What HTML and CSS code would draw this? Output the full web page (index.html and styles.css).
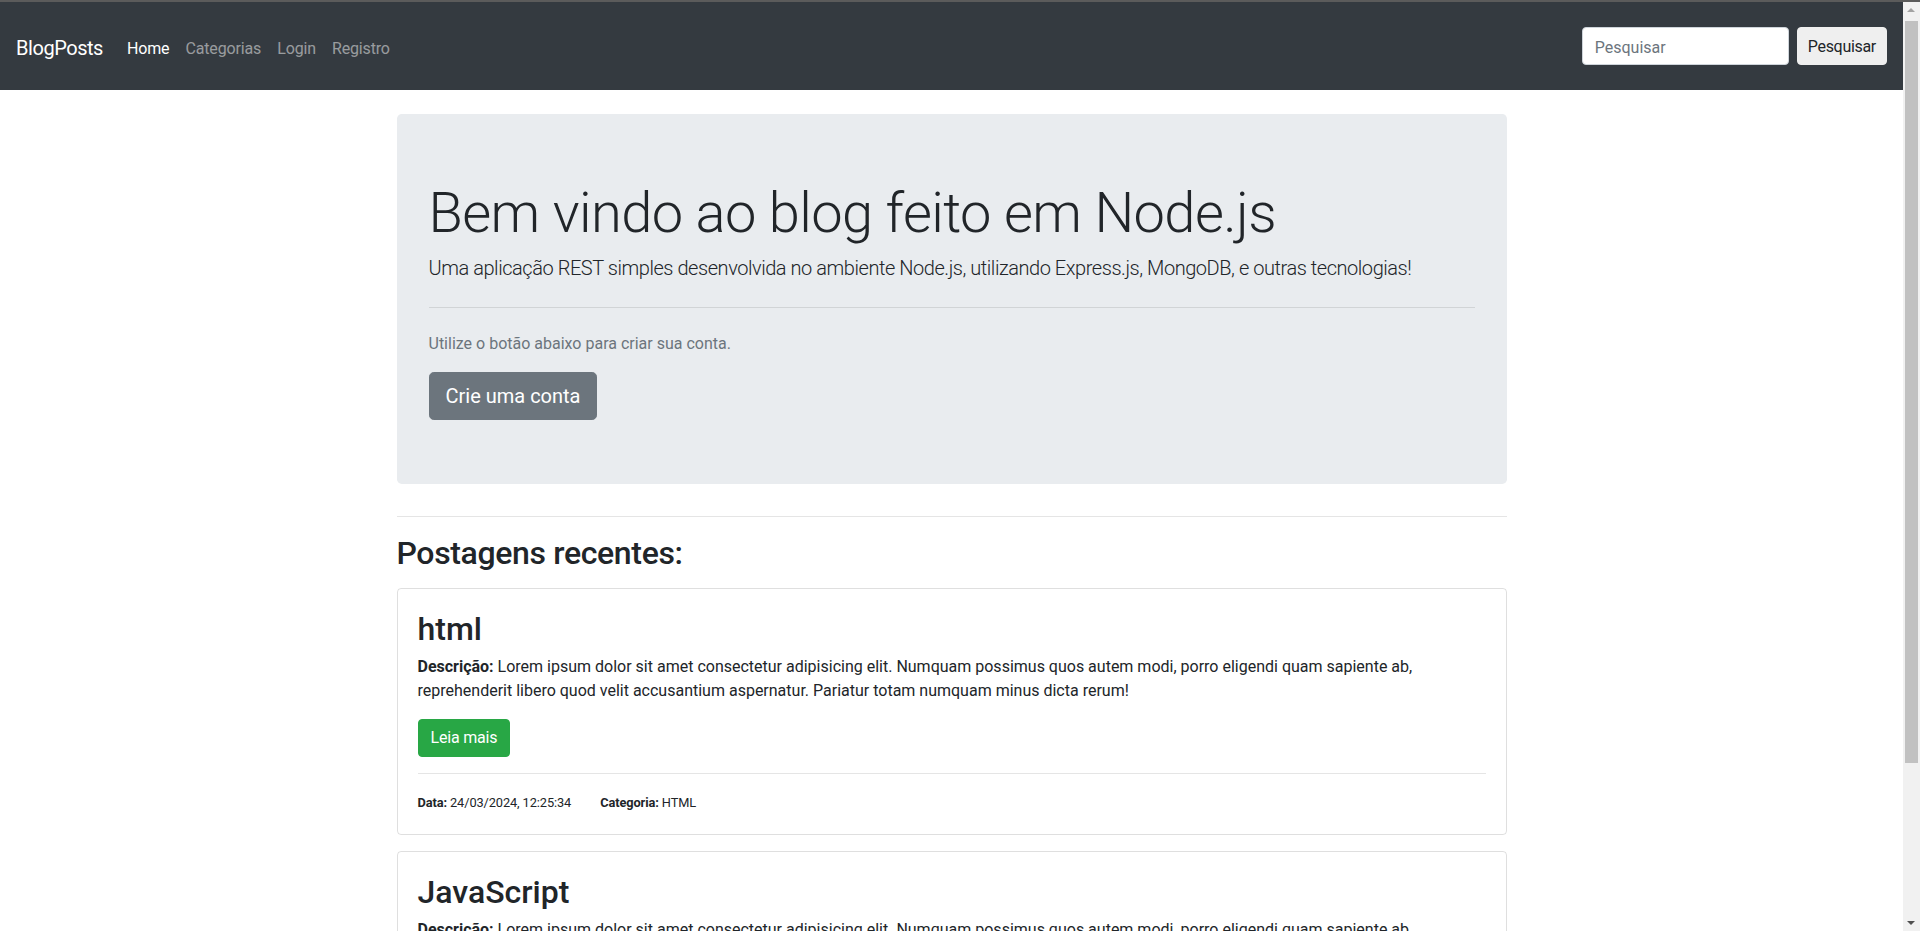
FILE: index.html
```html
<!DOCTYPE html>
<html lang="pt-BR">
<head>
<meta charset="utf-8">
<title>BlogPosts</title>
<link rel="stylesheet" href="styles.css">
</head>
<body>
<div class="topline"></div>
<div class="page">
  <nav class="navbar">
    <a class="brand" href="#">BlogPosts</a>
    <ul class="nav">
      <li><a class="nav-link active" href="#">Home</a></li>
      <li><a class="nav-link" href="#">Categorias</a></li>
      <li><a class="nav-link" href="#">Login</a></li>
      <li><a class="nav-link" href="#">Registro</a></li>
    </ul>
    <form class="search">
      <input class="search-input" type="search" placeholder="Pesquisar">
      <button class="search-btn" type="button">Pesquisar</button>
    </form>
  </nav>

  <main class="container">
    <section class="jumbotron">
      <h1 class="display">Bem vindo ao blog feito em Node.js</h1>
      <p class="lead">Uma aplicação REST simples desenvolvida no ambiente Node.js, utilizando Express.js, MongoDB, e outras tecnologias!</p>
      <hr class="jumbo-hr">
      <p class="muted">Utilize o botão abaixo para criar sua conta.</p>
      <a class="btn btn-secondary" href="#">Crie uma conta</a>
    </section>

    <hr class="divider">
    <h2 class="section-title">Postagens recentes:</h2>

    <article class="card">
      <h2 class="card-title">html</h2>
      <p class="card-text"><b>Descrição:</b> Lorem ipsum dolor sit amet consectetur adipisicing elit. Numquam possimus quos autem modi, porro eligendi quam sapiente ab, reprehenderit libero quod velit accusantium aspernatur. Pariatur totam numquam minus dicta rerum!</p>
      <a class="btn btn-success" href="#">Leia mais</a>
      <hr class="card-hr">
      <p class="meta"><small><b>Data:</b> 24/03/2024, 12:25:34</small><small class="meta-cat"><b>Categoria:</b> HTML</small></p>
    </article>

    <article class="card">
      <h2 class="card-title">JavaScript</h2>
      <p class="card-text"><b>Descrição:</b> Lorem ipsum dolor sit amet consectetur adipisicing elit. Numquam possimus quos autem modi, porro eligendi quam sapiente ab, reprehenderit libero quod velit accusantium aspernatur. Pariatur totam numquam minus dicta rerum!</p>
      <a class="btn btn-success" href="#">Leia mais</a>
      <hr class="card-hr">
      <p class="meta"><small><b>Data:</b> 24/03/2024, 12:31:07</small><small class="meta-cat"><b>Categoria:</b> JavaScript</small></p>
    </article>
  </main>
</div>

<div class="scrollbar" aria-hidden="true">
  <span class="sb-arrow sb-up"></span>
  <span class="sb-thumb"></span>
  <span class="sb-arrow sb-down"></span>
</div>
</body>
</html>
```
FILE: styles.css
```css
* { box-sizing: border-box; }

body {
  margin: 0;
  font-family: "Segoe UI", Roboto, "Noto Sans", "Liberation Sans", sans-serif;
  font-size: 16px;
  line-height: 1.5;
  color: #212529;
  background: #fff;
}

.topline {
  height: 2px;
  background: #5b5b5b;
}

.page {
  margin-right: 17px;
}

/* classic window scrollbar drawn over the right edge */
.scrollbar {
  position: fixed;
  top: 2px;
  right: 0;
  bottom: 0;
  width: 17px;
  background: #f1f1f1;
}

.sb-thumb {
  position: absolute;
  top: 19px;
  left: 2px;
  width: 13px;
  height: 742px;
  background: #c1c1c1;
}

.sb-arrow {
  position: absolute;
  left: 4px;
  width: 0;
  height: 0;
  border-left: 4px solid transparent;
  border-right: 4px solid transparent;
}

.sb-up {
  top: 6px;
  border-bottom: 4px solid #a3a3a3;
}

.sb-down {
  bottom: 6px;
  border-top: 4px solid #505050;
}

.navbar {
  display: flex;
  align-items: center;
  padding: 24px 16px;
  background: #343a40;
}

.brand {
  font-size: 20px;
  line-height: 30px;
  padding-top: 3px;
  letter-spacing: -0.45px;
  color: #fff;
  text-decoration: none;
  margin-right: 16px;
}

.nav {
  display: flex;
  list-style: none;
  margin: 0;
  padding: 0;
  flex: 1;
}

.nav-link {
  display: block;
  padding: 11px 8px 5px;
  color: rgba(255, 255, 255, 0.5);
  text-decoration: none;
  letter-spacing: -0.15px;
}

.nav-link.active { color: #fff; }

.search {
  display: flex;
  align-items: center;
  gap: 8px;
}

.search-input {
  width: 207px;
  height: 38px;
  padding: 7px 12px 5px;
  font: inherit;
  color: #495057;
  background: #fff;
  border: 1px solid #ced4da;
  border-radius: 4px;
}

.search-input::placeholder { color: #6c757d; }

.search-btn {
  height: 38px;
  padding: 2px 10px 0;
  font: inherit;
  letter-spacing: -0.3px;
  color: #212529;
  background: #efefef;
  border: 1px solid #efefef;
  border-radius: 4px;
}

.container {
  max-width: 1140px;
  margin: 24px auto 0;
  padding: 0 15px;
}

.jumbotron {
  background: #e9ecef;
  border-radius: 4.8px;
  padding: 64px 32px;
  margin-bottom: 32px;
}

.display {
  font-size: 56px;
  font-weight: 300;
  line-height: 1.2;
  letter-spacing: -0.6px;
  padding-top: 2px;
  margin: 0 0 6px;
}

.lead {
  font-size: 20px;
  font-weight: 300;
  letter-spacing: -0.45px;
  margin: 0 0 16px;
}

.jumbo-hr {
  margin: 24px 0;
  border: 0;
  border-top: 1px solid rgba(0, 0, 0, 0.1);
}

.muted {
  color: #6c757d;
  margin: 0 0 16px;
}

.btn {
  display: inline-block;
  text-decoration: none;
  color: #fff;
  border: 1px solid transparent;
  border-radius: 4px;
  vertical-align: middle;
}

.btn-secondary {
  background: #6c757d;
  border-color: #6c757d;
  font-size: 20px;
  line-height: 1.5;
  padding: 8px 16px;
  border-radius: 4.8px;
}

.btn-success {
  background: #28a745;
  border-color: #28a745;
  font-size: 16px;
  line-height: 1.5;
  padding: 6px 12px;
  letter-spacing: -0.2px;
}

.divider {
  margin: 16px 0;
  border: 0;
  border-top: 1px solid rgba(0, 0, 0, 0.1);
}

.section-title {
  font-size: 32px;
  font-weight: 500;
  line-height: 1.2;
  letter-spacing: -0.35px;
  padding-top: 1px;
  margin: 0 0 15px;
}

.card {
  border: 1px solid rgba(0, 0, 0, 0.125);
  border-radius: 4px;
  padding: 20px;
  margin-bottom: 16px;
}

.card-title {
  font-size: 32px;
  font-weight: 500;
  line-height: 1.2;
  padding-top: 1px;
  margin: 0 0 7px;
}

.card-text { margin: 0 0 16px; }

.card-hr {
  margin: 16px 0;
  border: 0;
  border-top: 1px solid rgba(0, 0, 0, 0.1);
}

.meta { margin: 0; }

.meta small {
  font-size: 80%;
  letter-spacing: -0.1px;
}

.meta-cat { margin-left: 29px; }
```
